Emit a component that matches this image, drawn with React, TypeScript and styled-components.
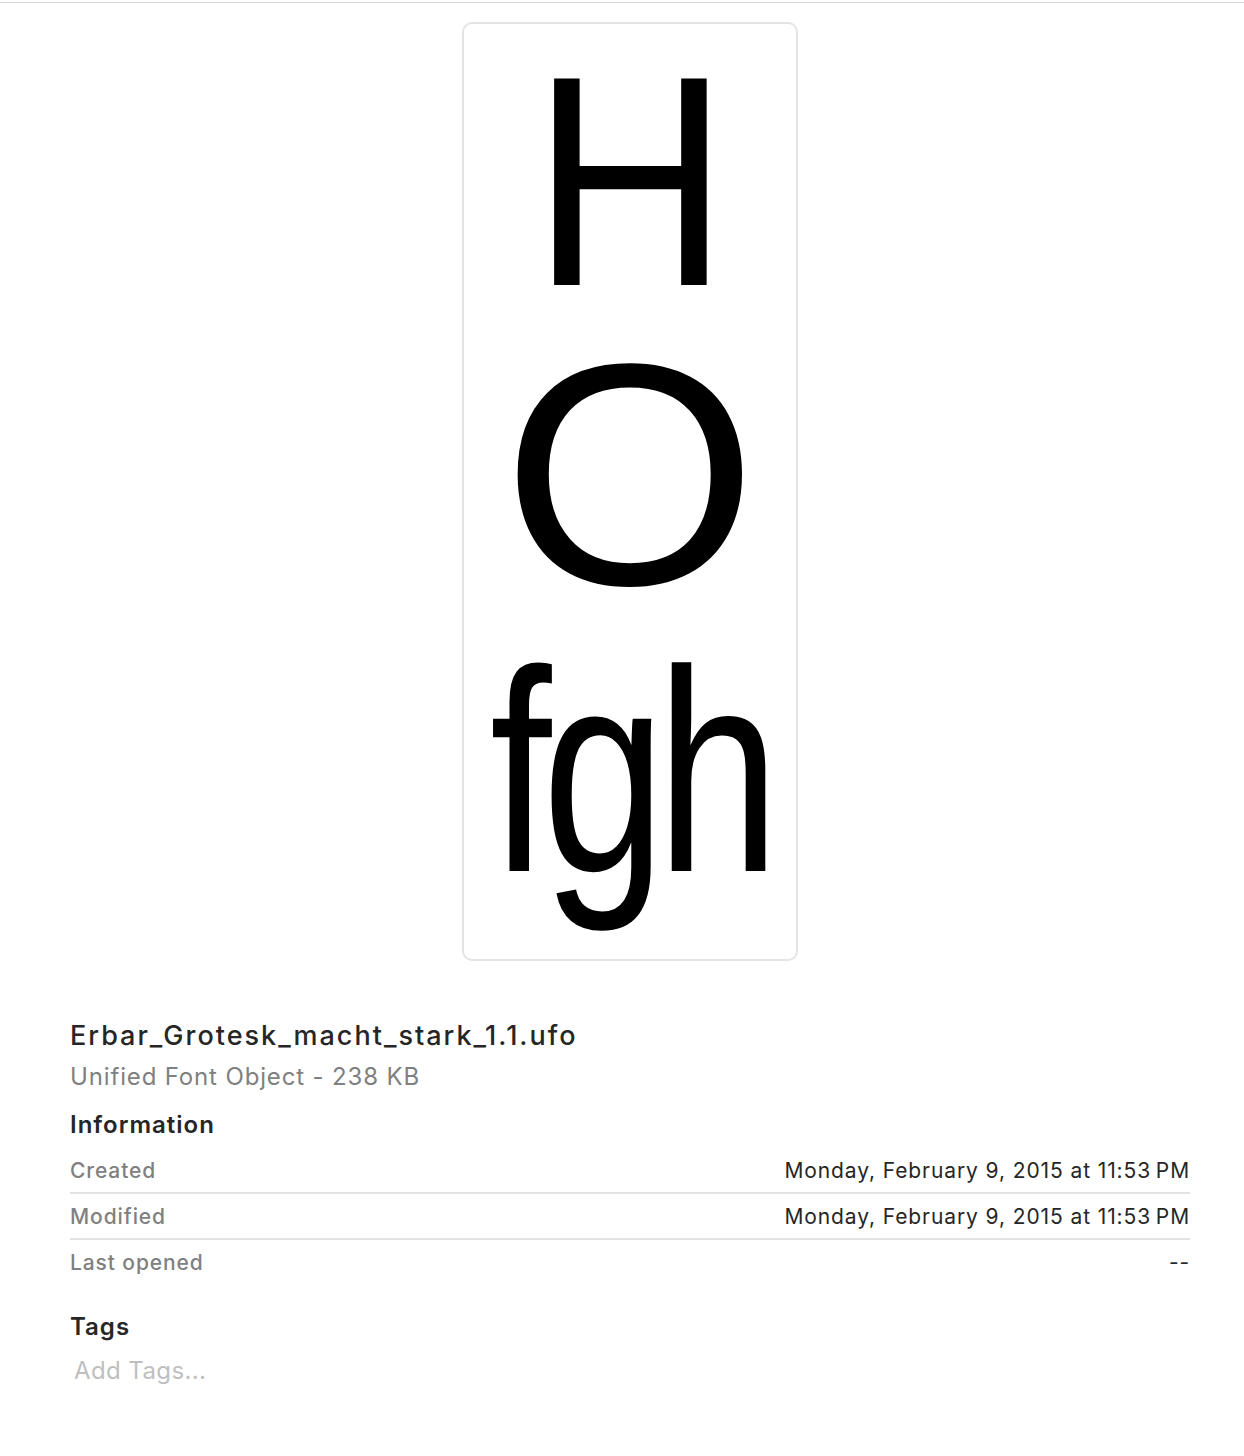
import styled, { createGlobalStyle } from "styled-components";

const GlobalStyle = createGlobalStyle`
  html, body {
    margin: 0;
    padding: 0;
    background: #ffffff;
  }
  body {
    font-family: "Inter", "Noto Sans", sans-serif;
    color: #262626;
  }
`;

const Page = styled.div`
  width: 1244px;
  min-height: 1456px;
  padding-top: 2px;
  box-sizing: border-box;
`;

const TopRule = styled.div`
  height: 1px;
  background: #d6d6d6;
`;

const Content = styled.div`
  padding: 0 54px 0 70px;
  display: flex;
  flex-direction: column;
`;

const PreviewCard = styled.div`
  align-self: center;
  margin-top: 19px;
  width: 336px;
  box-sizing: border-box;
  border: 2px solid #e4e4e4;
  border-radius: 10px;
  padding: 18px 0 46px;
  display: flex;
  flex-direction: column;
  align-items: center;
`;

const Glyph = styled.span<{ $size: number; $line: number; $sx: number; $track?: number }>`
  display: block;
  font-family: "Liberation Sans", Arial, sans-serif;
  font-size: ${(p) => p.$size}px;
  line-height: ${(p) => p.$line}px;
  letter-spacing: ${(p) => p.$track ?? 0}px;
  color: #000000;
  transform: scaleX(${(p) => p.$sx});
  transform-origin: center;
  white-space: nowrap;
`;

const FileName = styled.div`
  margin-top: 60px;
  font-size: 27px;
  line-height: 30px;
  font-weight: 500;
  letter-spacing: 2px;
  color: #262626;
`;

const Kind = styled.div`
  margin-top: 11px;
  font-size: 24px;
  line-height: 30px;
  letter-spacing: 0.85px;
  color: #808080;
`;

const SectionTitle = styled.div<{ $gap: number }>`
  margin-top: ${(p) => p.$gap}px;
  font-size: 24px;
  line-height: 30px;
  font-weight: 600;
  letter-spacing: 1px;
  color: #262626;
`;

const InfoList = styled.div`
  margin-top: 8px;
  display: flex;
  flex-direction: column;
`;

const InfoRow = styled.div`
  height: 44px;
  display: flex;
  align-items: center;
  justify-content: space-between;
  font-size: 21px;
  letter-spacing: 0.9px;
  border-bottom: 2px solid #e3e3e3;
  &:last-child {
    border-bottom: none;
  }
`;

const RowLabel = styled.span`
  color: #808080;
  font-weight: 500;
`;

const RowValue = styled.span`
  color: #262626;
`;

const AddTags = styled.div`
  margin-top: 14px;
  padding-left: 4px;
  font-size: 24px;
  line-height: 30px;
  letter-spacing: 0.4px;
  color: #bfbfbf;
`;

const rows = [
  { label: "Created", value: "Monday, February 9, 2015 at 11:53\u202FPM" },
  { label: "Modified", value: "Monday, February 9, 2015 at 11:53\u202FPM" },
  { label: "Last opened", value: "--" },
];

export default function App() {
  return (
    <Page>
      <GlobalStyle />
      <TopRule />
      <Content>
        <PreviewCard>
          <Glyph $size={300} $line={278} $sx={0.91}>H</Glyph>
          <Glyph $size={316} $line={309} $sx={1.04}>O</Glyph>
          <Glyph $size={288} $line={284} $sx={0.77} $track={-12}>fgh</Glyph>
        </PreviewCard>
        <FileName>Erbar_Grotesk_macht_stark_1.1.ufo</FileName>
        <Kind>Unified Font Object - 238 KB</Kind>
        <SectionTitle $gap={18}>Information</SectionTitle>
        <InfoList>
          {rows.map((r) => (
            <InfoRow key={r.label}>
              <RowLabel>{r.label}</RowLabel>
              <RowValue>{r.value}</RowValue>
            </InfoRow>
          ))}
        </InfoList>
        <SectionTitle $gap={28}>Tags</SectionTitle>
        <AddTags>Add Tags...</AddTags>
      </Content>
    </Page>
  );
}
